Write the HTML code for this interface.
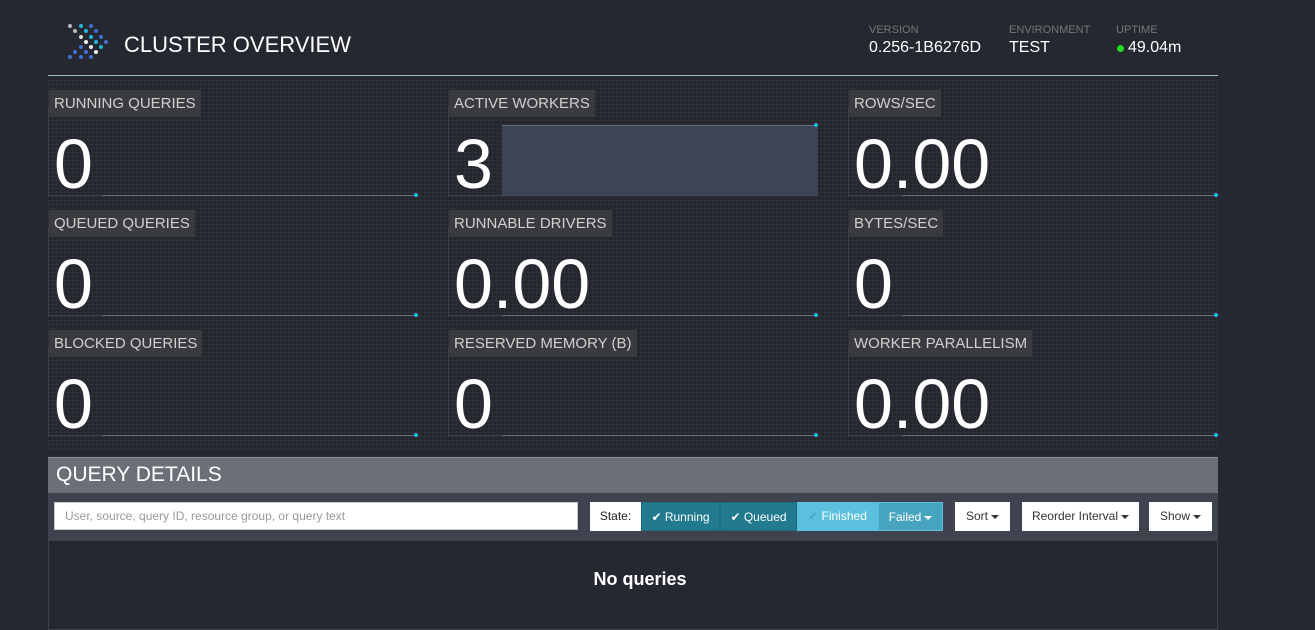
<!DOCTYPE html>
<html><head><style>
body{margin:0;width:1315px;height:620px;background:#252830;font-family:"Liberation Sans",sans-serif;overflow:hidden;position:relative;color:#fff}
.abs{position:absolute}
.grid{position:absolute;left:48px;top:80px;width:1170px;height:370px;background-color:#23262d;background-image:linear-gradient(#2c2f36 1px,transparent 1px),linear-gradient(90deg,#2c2f36 1px,transparent 1px);background-size:4px 4px}
.tile{position:absolute;width:370px;height:89px;border-left:1px solid #3d4048;border-bottom:1px solid #3d4048}
.lab{position:absolute;left:0;top:-16px;background:#3a3b3e;color:#d0d0d0;font-size:15px;padding:5px 5px 5px 5px;line-height:17px}
.num{position:absolute;left:5px;top:18px;font-size:70px;line-height:80px;color:#fff}
.spark{position:absolute;left:53px;bottom:-1px;width:314px;height:1px;background:#5d6e7a}
.dot{position:absolute;right:1px;bottom:-2px;width:4px;height:4px;border-radius:2px;background:#1fb6e0}
.btn{position:absolute;top:502px;height:29px;line-height:29px;font-size:12px;text-align:center}
.car{display:inline-block;border-top:4px solid currentColor;border-left:4px solid transparent;border-right:4px solid transparent;vertical-align:middle;margin-left:3px}
</style></head><body>
<svg class="abs" style="left:64px;top:22px" width="50" height="40">
<circle cx="6" cy="4" r="2" fill="#bbb"/><circle cx="17" cy="4" r="2" fill="#22b7e0"/><circle cx="27" cy="4" r="2" fill="#3f6fd0"/>
<circle cx="11" cy="9" r="2" fill="#bbb"/><circle cx="22" cy="9" r="2" fill="#22b7e0"/><circle cx="32" cy="9" r="2" fill="#3f6fd0"/>
<circle cx="17" cy="15" r="2" fill="#ddd"/><circle cx="27" cy="15" r="2" fill="#22b7e0"/><circle cx="37" cy="15" r="2" fill="#3f6fd0"/>
<circle cx="22" cy="20" r="2" fill="#eee"/><circle cx="32" cy="20" r="2" fill="#22b7e0"/><circle cx="42" cy="20" r="2" fill="#3f6fd0"/>
<circle cx="17" cy="25" r="2" fill="#3f6fd0"/><circle cx="27" cy="25" r="2" fill="#eee"/><circle cx="37" cy="25" r="2" fill="#22b7e0"/>
<circle cx="11" cy="30" r="2" fill="#3f6fd0"/><circle cx="22" cy="30" r="2" fill="#3f6fd0"/><circle cx="32" cy="30" r="2" fill="#eee"/>
<circle cx="6" cy="35" r="2" fill="#3f6fd0"/><circle cx="17" cy="35" r="2" fill="#3f6fd0"/><circle cx="27" cy="35" r="2" fill="#3f6fd0"/>
</svg>
<div class="abs" style="left:124px;top:32px;font-size:22px">CLUSTER OVERVIEW</div>
<div class="abs" style="left:869px;top:24px;font-size:11px;color:#777">VERSION</div>
<div class="abs" style="left:869px;top:39px;font-size:16px">0.256-1B6276D</div>
<div class="abs" style="left:1009px;top:24px;font-size:11px;color:#777">ENVIRONMENT</div>
<div class="abs" style="left:1009px;top:39px;font-size:16px">TEST</div>
<div class="abs" style="left:1116px;top:24px;font-size:11px;color:#777">UPTIME</div>
<div class="abs" style="left:1117px;top:45px;width:7px;height:7px;border-radius:4px;background:#1ee01e"></div>
<div class="abs" style="left:1128px;top:39px;font-size:16px">49.04m</div>
<div class="abs" style="left:48px;top:75px;width:1170px;height:1px;background:#9fb8c8"></div>
<div class="grid"></div>

<div class="tile" style="left:48px;top:106px"><div class="lab">RUNNING QUERIES</div><div class="num">0</div><div class="spark"></div><div class="dot"></div></div>
<div class="tile" style="left:448px;top:106px"><div class="abs" style="left:53px;top:19px;width:316px;height:70px;background:#3d4453;border-top:1px solid #5d6e7a"></div><div class="lab">ACTIVE WORKERS</div><div class="num">3</div><div class="dot" style="bottom:auto;top:17px"></div></div>
<div class="tile" style="left:848px;top:106px"><div class="lab">ROWS/SEC</div><div class="num">0.00</div><div class="spark"></div><div class="dot"></div></div>

<div class="tile" style="left:48px;top:226px"><div class="lab">QUEUED QUERIES</div><div class="num">0</div><div class="spark"></div><div class="dot"></div></div>
<div class="tile" style="left:448px;top:226px"><div class="lab">RUNNABLE DRIVERS</div><div class="num">0.00</div><div class="spark"></div><div class="dot"></div></div>
<div class="tile" style="left:848px;top:226px"><div class="lab">BYTES/SEC</div><div class="num">0</div><div class="spark"></div><div class="dot"></div></div>

<div class="tile" style="left:48px;top:346px"><div class="lab">BLOCKED QUERIES</div><div class="num">0</div><div class="spark"></div><div class="dot"></div></div>
<div class="tile" style="left:448px;top:346px"><div class="lab">RESERVED MEMORY (B)</div><div class="num">0</div><div class="spark"></div><div class="dot"></div></div>
<div class="tile" style="left:848px;top:346px"><div class="lab">WORKER PARALLELISM</div><div class="num">0.00</div><div class="spark"></div><div class="dot"></div></div>

<div class="abs" style="left:48px;top:457px;width:1170px;height:36px;background:#6b6f78;border-top:1px solid #8a8e96;box-sizing:border-box"></div>
<div class="abs" style="left:56px;top:463px;font-size:21px">QUERY DETAILS</div>
<div class="abs" style="left:48px;top:493px;width:1170px;height:47px;background:#3f4350"></div>
<div class="abs" style="left:54px;top:502px;width:524px;height:28px;background:#fff;border:1px solid #ccc;box-sizing:border-box;font-size:12px;color:#999;line-height:26px;padding-left:10px">User, source, query ID, resource group, or query text</div>
<div class="btn" style="left:590px;width:51px;background:#fff;color:#222">State:</div>
<div class="btn" style="left:641px;width:79px;background:#227a8e;border:1px solid #1d6a7c;box-sizing:border-box;color:#fff">✔ Running</div>
<div class="btn" style="left:720px;width:77px;background:#227a8e;border:1px solid #1d6a7c;box-sizing:border-box;color:#fff">✔ Queued</div>
<div class="btn" style="left:797px;width:81px;background:#5bc0de;color:#fff"><span style="color:#4aa8c4">✔</span> Finished</div>
<div class="btn" style="left:878px;width:65px;background:#46a4be;border:1px solid #5bc0de;box-sizing:border-box;color:#fff">Failed<span class="car"></span></div>
<div class="btn" style="left:955px;width:55px;background:#fff;color:#333">Sort<span class="car"></span></div>
<div class="btn" style="left:1022px;width:117px;background:#fff;color:#333">Reorder Interval<span class="car"></span></div>
<div class="btn" style="left:1149px;width:63px;background:#fff;color:#333">Show<span class="car"></span></div>
<div class="abs" style="left:48px;top:540px;width:1170px;height:90px;border:1px solid #3d4048;box-sizing:border-box"></div>
<div class="abs" style="left:48px;top:569px;width:1184px;text-align:center;font-size:18px;font-weight:bold">No queries</div>
</body></html>
